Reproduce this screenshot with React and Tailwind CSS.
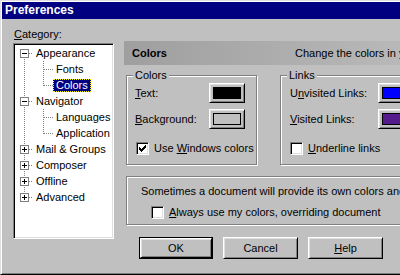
import React from 'react'

const raised = 'border border-t-white border-l-white border-b-black border-r-black shadow-[inset_1px_1px_0_#dfdfdf,inset_-1px_-1px_0_#808080]'
const sunken = 'border border-t-[#808080] border-l-[#808080] border-b-white border-r-white shadow-[inset_1px_1px_0_#000,inset_-1px_-1px_0_#dfdfdf]'
const etched = 'relative border border-[#808080] shadow-[inset_1px_1px_0_#fff,1px_1px_0_#fff]'

const Dot = ({ x1, y1, x2, y2 }) => (
  <line x1={x1} y1={y1} x2={x2} y2={y2} stroke="#808080" strokeDasharray="1 1" shapeRendering="crispEdges" />
)

const Expander = ({ open }) => (
  <g shapeRendering="crispEdges">
    <rect x="5.5" y="4.5" width="8" height="8" fill="#fff" stroke="#808080" />
    <line x1="7" y1="8.5" x2="12" y2="8.5" stroke="#000" />
    {!open && <line x1="9.5" y1="6" x2="9.5" y2="11" stroke="#000" />}
  </g>
)

const TreeRow = ({ label, child, open, first, last, lastChild, selected }) => (
  <div className="flex items-center h-[16px]">
    {child ? (
      <svg width="38" height="16" className="shrink-0">
        <Dot x1="9.5" y1="0" x2="9.5" y2="16" />
        <Dot x1="28.5" y1="0" x2="28.5" y2={lastChild ? 9 : 16} />
        <Dot x1="29" y1="8.5" x2="38" y2="8.5" />
      </svg>
    ) : (
      <svg width="18" height="16" className="shrink-0">
        <Dot x1="9.5" y1={first ? 8 : 0} x2="9.5" y2={last ? 8 : 16} />
        <Dot x1="14" y1="8.5" x2="18" y2="8.5" />
        <Expander open={open} />
      </svg>
    )}
    <span
      className={
        selected
          ? 'h-[13px] leading-[11px] px-[2px] bg-[#000080] text-white border border-dotted border-[#ffff00]'
          : 'h-[13px] leading-[13px] pl-[3px] pr-[2px]'
      }
    >
      {label}
    </span>
  </div>
)

const Check = ({ checked }) => (
  <span className={`w-[13px] h-[13px] shrink-0 bg-white flex items-center justify-center ${sunken}`}>
    {checked && (
      <svg width="7" height="7" viewBox="0 0 7 7">
        <path d="M0 2h1v3H0zM1 3h1v3H1zM2 4h1v3H2zM3 3h1v3H3zM4 2h1v3H4zM5 1h1v3H5zM6 0h1v3H6z" fill="#000" />
      </svg>
    )}
  </span>
)

const Swatch = ({ color }) => (
  <div className={`w-[36px] h-[20px] p-[3px] ${raised}`}>
    <div className="w-full h-full border border-black" style={{ background: color }} />
  </div>
)

const Legend = ({ children }) => (
  <span className="absolute -top-[7px] left-[6px] bg-[#c0c0c0] px-[2px] leading-[13px]">{children}</span>
)

const Button = ({ children, primary }) => (
  <div className={primary ? 'border border-black' : ''}>
    <div className={`${primary ? 'w-[72px] h-[20px]' : 'w-[75px] h-[22px]'} flex items-center justify-center ${raised}`}>
      {children}
    </div>
  </div>
)

export default function App() {
  return (
    <div className="w-[400px] h-[275px] overflow-hidden bg-[#c0c0c0] text-[11px] text-black font-['Liberation_Sans',Arial,sans-serif]">
      <div className="w-[480px] h-[275px] p-[1px] border border-t-[#dfdfdf] border-l-[#dfdfdf] border-b-black border-r-black shadow-[inset_1px_1px_0_#fff,inset_-1px_-1px_0_#808080]">
        {/* Title bar */}
        <div className="h-[17px] bg-[#000080] text-white font-bold text-[12px] leading-[17px] pl-[3px]">
          Preferences
        </div>

        <div className="flex">
          {/* Category tree */}
          <div className="pl-[11px] pt-[9px] w-[112px] shrink-0">
            <div className="ml-[1px] leading-[13px]">
              <u>C</u>ategory:
            </div>
            <div className={`mt-[2px] w-[101px] h-[196px] bg-white pl-[1px] pt-[1px] ${sunken}`}>
              <TreeRow label="Appearance" open first />
              <TreeRow label="Fonts" child />
              <TreeRow label="Colors" child lastChild selected />
              <TreeRow label="Navigator" open />
              <TreeRow label="Languages" child />
              <TreeRow label="Application" child lastChild />
              <TreeRow label="Mail & Groups" />
              <TreeRow label="Composer" />
              <TreeRow label="Offline" />
              <TreeRow label="Advanced" last />
            </div>
          </div>

          {/* Right pane */}
          <div className="ml-[10px] mt-[22px] flex-1">
            <div className="h-[24px] flex items-center pl-[8px] bg-gradient-to-r from-[#9f9f9f] via-[#afafaf] to-[#c0c0c0]">
              <span className="w-[163px] font-bold">Colors</span>
              <span>Change the colors in your web pages</span>
            </div>

            <div className="flex mt-[10px] ml-[2px]">
              <div className={`${etched} w-[131px] h-[90px] pl-[8px] pt-[7px]`}>
                <Legend>Colors</Legend>
                <div className="flex items-center h-[20px]">
                  <span className="w-[74px]"><u>T</u>ext:</span>
                  <Swatch color="#000000" />
                </div>
                <div className="flex items-center h-[20px] mt-[6px]">
                  <span className="w-[74px]"><u>B</u>ackground:</span>
                  <Swatch color="#c0c0c0" />
                </div>
                <div className="flex items-center mt-[11px] ml-[1px] gap-[5px]">
                  <Check checked />
                  <span>Use <u>W</u>indows colors</span>
                </div>
              </div>

              <div className={`${etched} ml-[23px] w-[170px] h-[90px] pl-[9px] pt-[7px]`}>
                <Legend>Links</Legend>
                <div className="flex items-center h-[20px]">
                  <span className="w-[88px]">U<u>n</u>visited Links:</span>
                  <Swatch color="#0000ff" />
                </div>
                <div className="flex items-center h-[20px] mt-[6px]">
                  <span className="w-[88px]"><u>V</u>isited Links:</span>
                  <Swatch color="#551a8b" />
                </div>
                <div className="flex items-center mt-[11px] gap-[5px]">
                  <Check />
                  <span><u>U</u>nderline links</span>
                </div>
              </div>
            </div>

            <div className={`${etched} mt-[11px] ml-[2px] h-[49px] pl-[14px] pt-[8px]`}>
              <div className="leading-[13px] whitespace-nowrap">
                Sometimes a document will provide its own colors and background.
              </div>
              <div className="flex items-center mt-[6px] ml-[10px] gap-[5px]">
                <Check />
                <span><u>A</u>lways use my colors, overriding document</span>
              </div>
            </div>

            <div className="flex gap-[10px] mt-[12px] ml-[15px]">
              <Button primary>OK</Button>
              <Button>Cancel</Button>
              <Button><u>H</u>elp</Button>
            </div>
          </div>
        </div>
      </div>
    </div>
  )
}
